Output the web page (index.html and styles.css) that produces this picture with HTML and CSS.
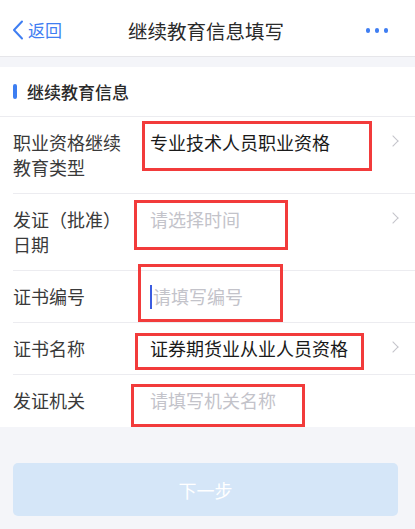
FILE: index.html
```html
<!DOCTYPE html>
<html lang="zh-CN">
<head>
<meta charset="utf-8">
<link rel="stylesheet" href="styles.css">
</head>
<body>
<div class="page">
  <header class="nav">
    <div class="back">
      <svg class="back-icon" width="12" height="20" viewBox="0 0 12 20"><path d="M10 1.5 L2 10 L10 18.5" fill="none" stroke="#3f7ef2" stroke-width="2" stroke-linecap="round" stroke-linejoin="round"/></svg>
      <span>返回</span>
    </div>
    <div class="title">继续教育信息填写</div>
    <div class="more"><i></i><i></i><i></i></div>
  </header>
  <div class="band"></div>
  <section class="card">
    <div class="sec-title"><span class="bar"></span>继续教育信息</div>
    <div class="list">
      <div class="row">
        <div class="label">职业资格继续<br>教育类型</div>
        <div class="value">专业技术人员职业资格</div>
        <span class="chev"></span>
      </div>
      <div class="row">
        <div class="label">发证（批准）<br>日期</div>
        <div class="value ph">请选择时间</div>
        <span class="chev"></span>
      </div>
      <div class="row">
        <div class="label">证书编号</div>
        <div class="value ph"><span class="cursor"></span>请填写编号</div>
      </div>
      <div class="row">
        <div class="label">证书名称</div>
        <div class="value">证券期货业从业人员资格</div>
        <span class="chev"></span>
      </div>
      <div class="row last">
        <div class="label">发证机关</div>
        <div class="value ph">请填写机关名称</div>
      </div>
    </div>
  </section>
  <div class="footer">
    <button class="next">下一步</button>
  </div>
  <div class="mark m1"></div>
  <div class="mark m2"></div>
  <div class="mark m3"></div>
  <div class="mark m4"></div>
  <div class="mark m5"></div>
</div>
</body>
</html>
```
FILE: styles.css
```css
* { box-sizing: border-box; }
html, body { margin: 0; padding: 0; }
body {
  width: 415px;
  height: 529px;
  overflow: hidden;
  background: #f4f5f9;
  font-family: "Noto Sans CJK SC", "Noto Sans", sans-serif;
}
.page { position: relative; height: 529px; }
.nav {
  height: 57px;
  background: #fff;
  border-bottom: 1px solid #e6e6ea;
  display: flex;
  align-items: center;
  justify-content: space-between;
  padding: 0 27px 0 12px;
  position: relative;
}
.back {
  display: flex;
  align-items: center;
  gap: 4px;
  color: #3f7ef2;
  font-size: 17px;
  margin-top: 4px;
}
.back span { line-height: 20px; }
.title {
  position: absolute;
  left: 0; right: 0;
  text-align: center;
  font-size: 19.5px;
  color: #2a2a2a;
  top: 18px;
  line-height: 26px;
  pointer-events: none;
  padding-right: 3px;
}
.more { display: flex; gap: 4.5px; margin-top: 5px; }
.more i {
  display: block;
  width: 4.5px; height: 4.5px;
  border-radius: 50%;
  background: #3f7ef2;
}
.band { height: 10px; }
.card { background: #fff; }
.sec-title {
  height: 50px;
  display: flex;
  align-items: center;
  padding-left: 13px;
  font-size: 17px;
  color: #2a2a2a;
  font-weight: 500;
  border-bottom: 1px solid #ececf0;
}
.bar {
  width: 4px; height: 15px;
  border-radius: 2px;
  background: #3d7ef1;
  margin-right: 10px;
}
.list { padding-left: 13px; }
.row {
  display: flex;
  align-items: flex-start;
  padding: 13px 18px 13px 0;
  border-bottom: 1px solid #ececf0;
  font-size: 18px;
  line-height: 25px;
}
.row.last { border-bottom: none; padding-bottom: 14px; }
.label { width: 137px; flex: none; color: #3a3a3a; }
.value { flex: 1; color: #1a1a1a; display: flex; align-items: center; height: 25px; }
.value.ph { color: #c3c3ca; }
.cursor {
  display: inline-block;
  width: 2px; height: 24px;
  background: #3b5ce0;
  margin-right: 1px;
}
.chev {
  width: 8px; height: 8px;
  border-top: 1.5px solid #c4c4ca;
  border-right: 1.5px solid #c4c4ca;
  transform: rotate(45deg);
  margin-top: 7px;
}
.footer { padding: 36px 17px 0 13px; }
.next {
  display: block;
  width: 100%;
  height: 53px;
  border: none;
  border-radius: 5px;
  background: #d5e6f8;
  color: #fff;
  font-family: inherit;
  font-size: 18px;
}
.mark {
  position: absolute;
  border: 3px solid #f23b3b;
}
.m1 { left: 142px; top: 121px; width: 230px; height: 50px; }
.m2 { left: 134px; top: 200px; width: 154px; height: 50px; }
.m3 { left: 138px; top: 264px; width: 145px; height: 58px; }
.m4 { left: 135px; top: 333px; width: 229px; height: 37px; }
.m5 { left: 131px; top: 384px; width: 174px; height: 43px; }
```
